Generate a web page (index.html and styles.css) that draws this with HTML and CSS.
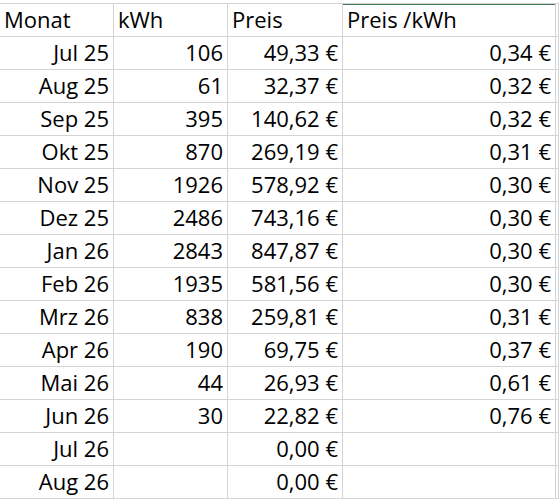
FILE: index.html
```html
<!DOCTYPE html>
<html lang="de">
<head>
    <meta charset="UTF-8">
    <title>Strom pro Monat</title>
    <link rel="stylesheet" href="styles.css">
</head>
<body>

    <table class="sheet">
        <colgroup>
            <col class="c-month">
            <col class="c-kwh">
            <col class="c-price">
            <col class="c-unit">
            <col class="c-rest">
        </colgroup>
        <tr class="head">
            <td>Monat</td>
            <td>kWh</td>
            <td>Preis</td>
            <td class="active">Preis /kWh</td>
            <td></td>
        </tr>
        <tr><td class="num">Jul 25</td><td class="num">106</td><td class="num">49,33 €</td><td class="num">0,34 €</td><td></td></tr>
        <tr><td class="num">Aug 25</td><td class="num">61</td><td class="num">32,37 €</td><td class="num">0,32 €</td><td></td></tr>
        <tr><td class="num">Sep 25</td><td class="num">395</td><td class="num">140,62 €</td><td class="num">0,32 €</td><td></td></tr>
        <tr><td class="num">Okt 25</td><td class="num">870</td><td class="num">269,19 €</td><td class="num">0,31 €</td><td></td></tr>
        <tr><td class="num">Nov 25</td><td class="num">1926</td><td class="num">578,92 €</td><td class="num">0,30 €</td><td></td></tr>
        <tr><td class="num">Dez 25</td><td class="num">2486</td><td class="num">743,16 €</td><td class="num">0,30 €</td><td></td></tr>
        <tr><td class="num">Jan 26</td><td class="num">2843</td><td class="num">847,87 €</td><td class="num">0,30 €</td><td></td></tr>
        <tr><td class="num">Feb 26</td><td class="num">1935</td><td class="num">581,56 €</td><td class="num">0,30 €</td><td></td></tr>
        <tr><td class="num">Mrz 26</td><td class="num">838</td><td class="num">259,81 €</td><td class="num">0,31 €</td><td></td></tr>
        <tr><td class="num">Apr 26</td><td class="num">190</td><td class="num">69,75 €</td><td class="num">0,37 €</td><td></td></tr>
        <tr><td class="num">Mai 26</td><td class="num">44</td><td class="num">26,93 €</td><td class="num">0,61 €</td><td></td></tr>
        <tr><td class="num">Jun 26</td><td class="num">30</td><td class="num">22,82 €</td><td class="num">0,76 €</td><td></td></tr>
        <tr><td class="num">Jul 26</td><td></td><td class="num">0,00 €</td><td></td><td></td></tr>
        <tr><td class="num">Aug 26</td><td></td><td class="num">0,00 €</td><td></td><td></td></tr>
    </table>

</body>
</html>
```

FILE: styles.css
```css
body {
    margin: 0;
    background: #fff;
    overflow: hidden;
}

.sheet {
    margin-top: 3px;
    border-collapse: separate;
    border-spacing: 0;
    table-layout: fixed;
    width: 559px;
    font-family: "Open Sans", "Liberation Sans", sans-serif;
    font-size: 22px;
    color: #000;
    border-top: 1px solid #d4d4d4;
}

.c-month { width: 114px; }
.c-kwh { width: 114px; }
.c-price { width: 115px; }
.c-unit { width: 213px; }
.c-rest { width: 3px; }

.sheet td {
    box-sizing: border-box;
    height: 33px;
    padding: 0 4px 3px 4px;
    line-height: 28px;
    vertical-align: bottom;
    white-space: nowrap;
    overflow: hidden;
    border-right: 1px solid #d4d4d4;
    border-bottom: 1px solid #d4d4d4;
}

.sheet td.num { text-align: right; }

/* selected cell above shows its green edge */
.sheet td.active { box-shadow: inset 0 1px 0 #3d7a56; }
```
